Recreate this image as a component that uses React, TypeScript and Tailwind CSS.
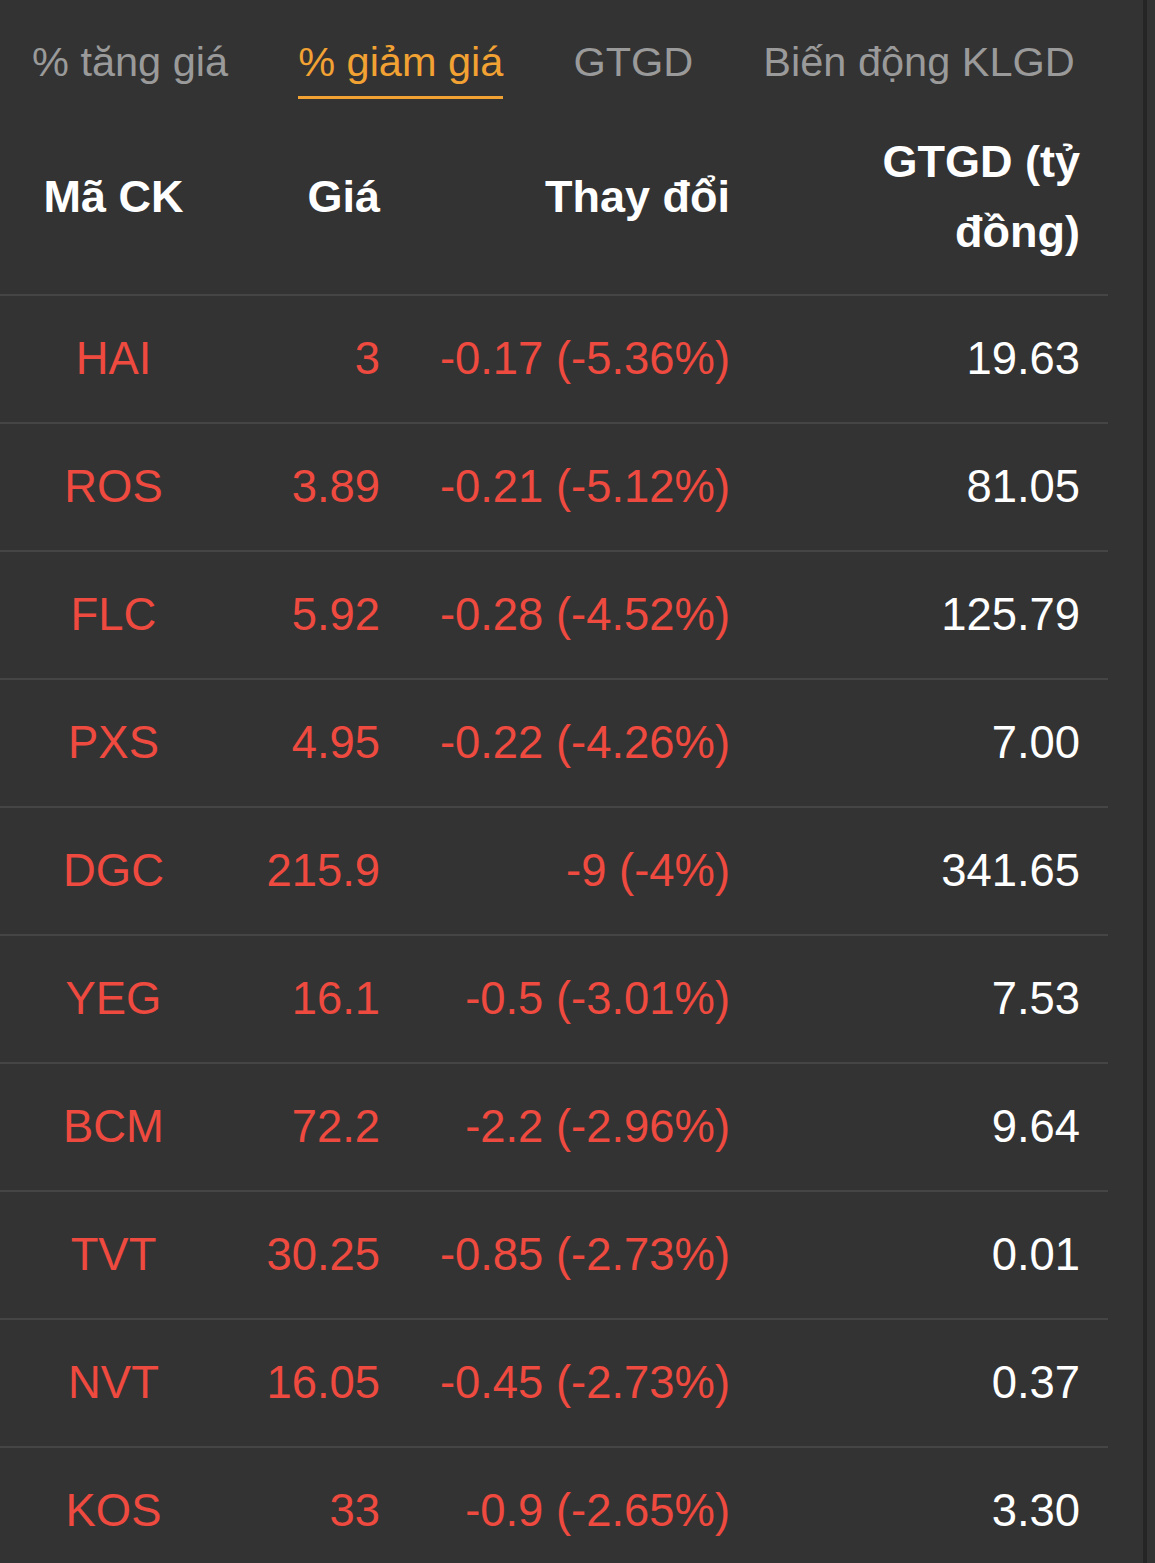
import React, { useState } from "react";

type Row = { code: string; price: string; change: string; value: string };

const ROWS: Row[] = [
  { code: "HAI", price: "3", change: "-0.17 (-5.36%)", value: "19.63" },
  { code: "ROS", price: "3.89", change: "-0.21 (-5.12%)", value: "81.05" },
  { code: "FLC", price: "5.92", change: "-0.28 (-4.52%)", value: "125.79" },
  { code: "PXS", price: "4.95", change: "-0.22 (-4.26%)", value: "7.00" },
  { code: "DGC", price: "215.9", change: "-9 (-4%)", value: "341.65" },
  { code: "YEG", price: "16.1", change: "-0.5 (-3.01%)", value: "7.53" },
  { code: "BCM", price: "72.2", change: "-2.2 (-2.96%)", value: "9.64" },
  { code: "TVT", price: "30.25", change: "-0.85 (-2.73%)", value: "0.01" },
  { code: "NVT", price: "16.05", change: "-0.45 (-2.73%)", value: "0.37" },
  { code: "KOS", price: "33", change: "-0.9 (-2.65%)", value: "3.30" },
];

const TABS = ["% tăng giá", "% giảm giá", "GTGD", "Biến động KLGD"];

export default function App() {
  const [tab, setTab] = useState(1);

  return (
    <div
      className="flex w-[1155px] h-[1563px] overflow-hidden bg-[#333333]"
      style={{ fontFamily: '"Liberation Sans", Arial, sans-serif' }}
    >
      <div className="w-[1143px] shrink-0 pr-[35px]">
        {/* tabs */}
        <div className="flex gap-[70px] pl-[32px]">
          {TABS.map((t, i) => (
            <button
              key={t}
              onClick={() => setTab(i)}
              className={`pt-[38px] pb-[11px] border-b-[3px] text-[41.5px] leading-[47px] whitespace-nowrap ${
                tab === i ? "border-[#f2a133] text-[#f2a133]" : "border-transparent text-[#9a9a9a]"
              }`}
            >
              {t}
            </button>
          ))}
        </div>

        {/* header */}
        <div className="flex h-[197px] items-center border-b-2 border-[#454545] text-white font-bold text-[45px] leading-[70px]">
          <div className="w-[227px] text-center">Mã CK</div>
          <div className="w-[181px] pr-[28px] text-right">Giá</div>
          <div className="w-[350px] pr-[28px] text-right">Thay đổi</div>
          <div className="w-[350px] pr-[28px] text-right">
            GTGD (tỷ
            <br />
            đồng)
          </div>
        </div>

        {/* rows */}
        {ROWS.map(r => (
          <div
            key={r.code}
            className="flex h-[128px] shrink-0 items-center border-b-2 border-[#454545] text-[45.4px] leading-[52px] whitespace-nowrap"
          >
            <div className="w-[227px] text-center text-[#ef4a3f]">{r.code}</div>
            <div className="w-[181px] pr-[28px] text-right text-[#ef4a3f]">{r.price}</div>
            <div className="w-[350px] pr-[28px] text-right text-[#ef4a3f]">{r.change}</div>
            <div className="w-[350px] pr-[28px] text-right text-white">{r.value}</div>
          </div>
        ))}
      </div>
      <div className="w-[4px] shrink-0 bg-[#252525]" />
      <div className="flex-1 bg-[#333333]" />
    </div>
  );
}
